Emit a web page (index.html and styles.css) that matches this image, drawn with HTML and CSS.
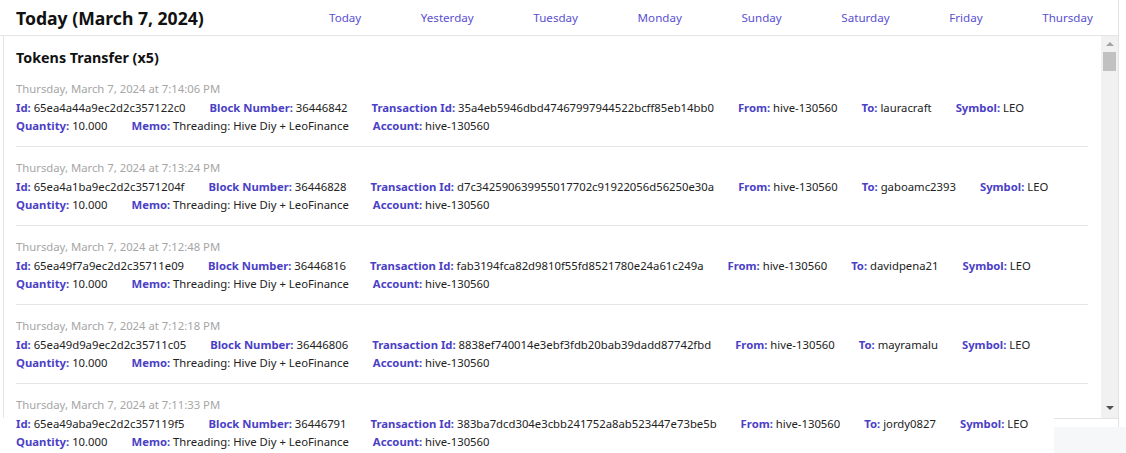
FILE: index.html
```html
<!DOCTYPE html>
<html lang="en">
<head>
<meta charset="utf-8">
<title>Today (March 7, 2024)</title>
<link rel="stylesheet" href="styles.css">
</head>
<body>
<div class="card">
  <header class="head">
    <h1 class="title">Today (March 7, 2024)</h1>
    <nav class="nav">
      <a href="#">Today</a>
      <a href="#">Yesterday</a>
      <a href="#">Tuesday</a>
      <a href="#">Monday</a>
      <a href="#">Sunday</a>
      <a href="#">Saturday</a>
      <a href="#">Friday</a>
      <a href="#">Thursday</a>
    </nav>
  </header>
  <section class="body">
    <h2 class="section-title">Tokens Transfer (x5)</h2>
    <div class="records">
      <article class="record">
        <div class="time">Thursday, March 7, 2024 at 7:14:06 PM</div>
        <div class="row">
          <span><b>Id:</b> 65ea4a44a9ec2d2c357122c0</span>
          <span><b>Block Number:</b> 36446842</span>
          <span><b>Transaction Id:</b> 35a4eb5946dbd47467997944522bcff85eb14bb0</span>
          <span><b>From:</b> hive-130560</span>
          <span><b>To:</b> lauracraft</span>
          <span><b>Symbol:</b> LEO</span>
        </div>
        <div class="row">
          <span><b>Quantity:</b> 10.000</span>
          <span><b>Memo:</b> Threading: Hive Diy + LeoFinance</span>
          <span><b>Account:</b> hive-130560</span>
        </div>
      </article>
      <article class="record">
        <div class="time">Thursday, March 7, 2024 at 7:13:24 PM</div>
        <div class="row">
          <span><b>Id:</b> 65ea4a1ba9ec2d2c3571204f</span>
          <span><b>Block Number:</b> 36446828</span>
          <span><b>Transaction Id:</b> d7c342590639955017702c91922056d56250e30a</span>
          <span><b>From:</b> hive-130560</span>
          <span><b>To:</b> gaboamc2393</span>
          <span><b>Symbol:</b> LEO</span>
        </div>
        <div class="row">
          <span><b>Quantity:</b> 10.000</span>
          <span><b>Memo:</b> Threading: Hive Diy + LeoFinance</span>
          <span><b>Account:</b> hive-130560</span>
        </div>
      </article>
      <article class="record">
        <div class="time">Thursday, March 7, 2024 at 7:12:48 PM</div>
        <div class="row">
          <span><b>Id:</b> 65ea49f7a9ec2d2c35711e09</span>
          <span><b>Block Number:</b> 36446816</span>
          <span><b>Transaction Id:</b> fab3194fca82d9810f55fd8521780e24a61c249a</span>
          <span><b>From:</b> hive-130560</span>
          <span><b>To:</b> davidpena21</span>
          <span><b>Symbol:</b> LEO</span>
        </div>
        <div class="row">
          <span><b>Quantity:</b> 10.000</span>
          <span><b>Memo:</b> Threading: Hive Diy + LeoFinance</span>
          <span><b>Account:</b> hive-130560</span>
        </div>
      </article>
      <article class="record">
        <div class="time">Thursday, March 7, 2024 at 7:12:18 PM</div>
        <div class="row">
          <span><b>Id:</b> 65ea49d9a9ec2d2c35711c05</span>
          <span><b>Block Number:</b> 36446806</span>
          <span><b>Transaction Id:</b> 8838ef740014e3ebf3fdb20bab39dadd87742fbd</span>
          <span><b>From:</b> hive-130560</span>
          <span><b>To:</b> mayramalu</span>
          <span><b>Symbol:</b> LEO</span>
        </div>
        <div class="row">
          <span><b>Quantity:</b> 10.000</span>
          <span><b>Memo:</b> Threading: Hive Diy + LeoFinance</span>
          <span><b>Account:</b> hive-130560</span>
        </div>
      </article>
      <article class="record">
        <div class="time">Thursday, March 7, 2024 at 7:11:33 PM</div>
        <div class="row">
          <span><b>Id:</b> 65ea49aba9ec2d2c357119f5</span>
          <span><b>Block Number:</b> 36446791</span>
          <span><b>Transaction Id:</b> 383ba7dcd304e3cbb241752a8ab523447e73be5b</span>
          <span><b>From:</b> hive-130560</span>
          <span><b>To:</b> jordy0827</span>
          <span><b>Symbol:</b> LEO</span>
        </div>
        <div class="row">
          <span><b>Quantity:</b> 10.000</span>
          <span><b>Memo:</b> Threading: Hive Diy + LeoFinance</span>
          <span><b>Account:</b> hive-130560</span>
        </div>
      </article>
    </div>
    <div class="scrollbar" aria-hidden="true">
      <div class="sb-up"></div>
      <div class="sb-thumb"></div>
      <div class="sb-down"></div>
    </div>
  </section>
</div>
<div class="foot">
  <div class="foot-white"></div>
  <div class="foot-gray"></div>
</div>
</body>
</html>
```
FILE: styles.css
```css
* {
  box-sizing: border-box;
  margin: 0;
  padding: 0;
}

html, body {
  width: 1126px;
  height: 453px;
  overflow: hidden;
}

body {
  font-family: "Noto Sans", "Open Sans", sans-serif;
  font-size: 11.3px;
  color: #222;
  background: #fff;
}

.card {
  width: 1119px;
  height: 427px;
  border-right: 1px solid #e2e2e2;
}

.head {
  height: 36px;
  display: flex;
  align-items: center;
  padding-left: 16px;
  padding-right: 25px;
  border-bottom: 1px solid #e6e6e6;
}

.title {
  width: 313px;
  font-size: 17.6px;
  font-weight: 700;
  color: #111;
  line-height: 24px;
}

.nav {
  flex: 1;
  display: flex;
  justify-content: space-between;
}

.nav a {
  color: #5a4fd0;
  text-decoration: none;
  font-size: 11.6px;
}

.body {
  position: relative;
  height: 382px;
  margin-left: 3px;
  border-left: 1px solid #e6e6e6;
  padding: 12px 30px 0 12px;
}

.body::after {
  content: "";
  position: absolute;
  left: 1050px;
  right: 0;
  bottom: -1px;
  height: 1px;
  background: #e2e2e2;
}

.section-title {
  font-size: 14.3px;
  font-weight: 700;
  line-height: 20px;
  color: #111;
}

.record {
  padding: 11px 0;
  border-bottom: 1px solid #e6e6e6;
}

.record:last-child {
  border-bottom: none;
}

.time {
  line-height: 20px;
  color: #a6a6a6;
}

.row {
  display: flex;
  column-gap: 24px;
  line-height: 18px;
  white-space: nowrap;
}

.row b {
  color: #4b3fc6;
  font-weight: 700;
}

.scrollbar {
  position: absolute;
  top: 0;
  right: 0;
  width: 17px;
  height: 382px;
  background: #f1f1f1;
}

.sb-up,
.sb-down {
  position: absolute;
  left: 5px;
  width: 0;
  height: 0;
  border-left: 4px solid transparent;
  border-right: 4px solid transparent;
}

.sb-up {
  top: 6px;
  border-bottom: 4px solid #a3a3a3;
}

.sb-down {
  bottom: 8px;
  border-top: 4px solid #505050;
}

.sb-thumb {
  position: absolute;
  top: 16px;
  left: 2px;
  width: 13px;
  height: 19px;
  background: #c1c1c1;
}

.foot {
  display: flex;
  height: 26px;
}

.foot-white {
  width: 1054px;
  background: #fff;
}

.foot-gray {
  flex: 1;
  background: #f6f7f9;
}
```
